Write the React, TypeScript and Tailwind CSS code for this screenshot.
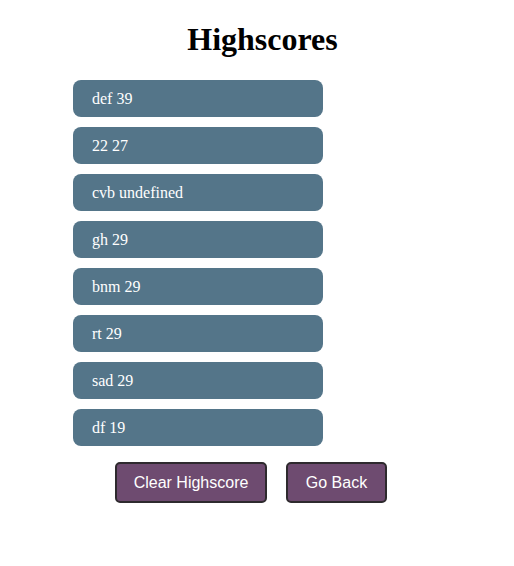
import React from 'react';

const scores = [
  { name: 'def', score: '39' },
  { name: '22', score: '27' },
  { name: 'cvb', score: 'undefined' },
  { name: 'gh', score: '29' },
  { name: 'bnm', score: '29' },
  { name: 'rt', score: '29' },
  { name: 'sad', score: '29' },
  { name: 'df', score: '19' },
];

function App() {
  return (
    <div className="w-[514px] h-[566px] bg-white font-['Liberation_Serif',serif] text-black">
      <h1 className="pt-[21px] pl-[11px] text-center text-[32px] leading-[37px] font-bold">
        Highscores
      </h1>
      <ul className="mt-[22px] ml-[73px] w-[250px] flex flex-col gap-[10px]">
        {scores.map((s, i) => (
          <li
            key={i}
            className="h-[37px] rounded-[8px] bg-[#547589] text-white text-[16px] pl-[19px] flex items-center"
          >
            {s.name} {s.score}
          </li>
        ))}
      </ul>
      <div className="mt-[16px] pl-[115px] flex gap-[19px] font-['Liberation_Sans',Arial,sans-serif]">
        <button className="h-[41px] w-[152px] rounded-[5px] bg-[#6e4b70] border-2 border-[#2e2a2e] text-white text-[16px]">
          Clear Highscore
        </button>
        <button className="h-[41px] w-[101px] rounded-[5px] bg-[#6e4b70] border-2 border-[#2e2a2e] text-white text-[16px]">
          Go Back
        </button>
      </div>
    </div>
  );
}

export default App;
